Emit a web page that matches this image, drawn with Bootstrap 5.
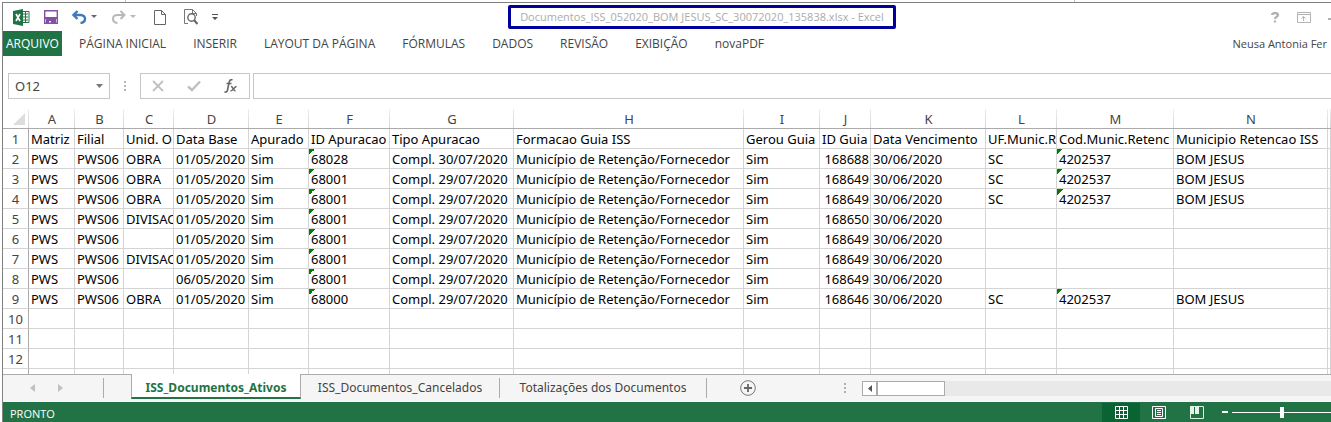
<!DOCTYPE html>
<html lang="pt-BR">
<head>
<meta charset="utf-8">
<meta name="viewport" content="width=device-width, initial-scale=1">
<title>Documentos_ISS_052020_BOM JESUS_SC_30072020_135838.xlsx - Excel</title>
<link rel="stylesheet" href="https://cdn.jsdelivr.net/npm/bootstrap@5.3.0/dist/css/bootstrap.min.css">
<style>
  :root { --xl: #217346; --rule: #d4d4d4; --edge: #ababab; --box: #c6c6c6; }
  body { font: 12px/16px "Open Sans", "Noto Sans", sans-serif; color: #444; background: #fff; }
  button { color: inherit; font: inherit; background: none; border: 0; padding: 0; }
  svg { display: block; flex: none; }
  .backdrop { height: 2px; padding-left: 125px; }
  .backdrop span { width: 1px; background: var(--box); }
  .backdrop span + span { margin-left: 948px; }
  .app { margin-left: 2px; border: solid #808080; border-width: 1px 0 0 1px; min-height: 0; }

  .titlebar { height: 28px; }
  .quick { flex: 496; padding-left: 10px; gap: 14px; }
  .file-name { border: 3px solid #00009c; border-radius: 2px; color: #ababab; font-size: 11px; line-height: 18px; padding: 0 9px; }
  .win { flex: 436; gap: 17px; }

  .ribbon { height: 25px; gap: 27px; }
  .ribbon a { color: #444; text-decoration: none; }
  .ribbon .file-tab { background: var(--xl); color: #fff; width: 59px; line-height: 25px; margin-right: -10px; text-align: center; }
  .user { font-size: 11px; }

  .formula { padding: 17px 0 10px 5px; }
  .boxed { height: 26px; border: 1px solid var(--box); }
  .name-box { width: 102px; padding: 0 6px; }
  .name-box input { width: 76px; border: 0; padding: 0; color: #444; outline: 0; font: 13px "Noto Sans", sans-serif; }
  .tools { width: 110px; margin-right: 3px; }
  .fx-input { border-right: 0; outline: 0; padding: 0 4px; font-size: 13px; }

  .sheet { min-height: 0; overflow: hidden; font: 13px/18px "Noto Sans", "Open Sans", sans-serif; }
  .sheet table { table-layout: fixed; width: 100%; border-collapse: separate; border-spacing: 0; color: #000; }
  .sheet td, .sheet th { height: 20px; padding: 1px 0 0 2px; border: solid var(--rule); border-width: 0 1px 1px 0; white-space: nowrap; overflow: hidden; font-weight: 400; }
  .sheet thead th { padding: 1px 0 0; text-align: center; color: #444; border-bottom-color: var(--edge); border-right: 0;
    background: linear-gradient(#eee, #d4d4d4) right / 1px 100% no-repeat; }
  .sheet tbody th { padding: 1px 0 0; text-align: center; color: #444; border-right-color: var(--edge); }
  .sheet .num { text-align: right; padding-right: 1px; }
  .sheet .flag { background: linear-gradient(135deg, #008000 50%, transparent 50%) 0 0 / 6px 6px no-repeat; }
  .sheet thead svg { margin-left: 10px; }

  .tabs { height: 28px; background: #f5f5f5; border-top: 1px solid var(--edge); font: 12px/20px "Noto Sans", "Open Sans", sans-serif; }
  .tabs .arrows { width: 101px; height: 20px; margin-top: 3px; padding-left: 27px; gap: 23px; border-right: 1px solid var(--edge); }
  .tabs a { color: #444; text-decoration: none; height: 20px; margin-top: 3px; text-align: center; border-right: 1px solid var(--edge); }
  .tabs a.current { width: 170px; height: 25px; margin: -1px 0 0 27px; padding-top: 4px; background: #fff; color: var(--xl); font-weight: 700;
    border: solid var(--edge); border-width: 0 1px 2px; border-bottom-color: var(--xl); }
  .tabs .second { width: 199px; }
  .tabs .third { width: 207px; }
  .tabs .add { margin: 5px 88px 0 33px; }
  .track { height: 15px; margin-top: 6px; background: #e9e9e9; }
  .track .step { width: 15px; border: 1px solid var(--edge); background: #fff; }
  .track .thumb { width: 68px; border: 1px solid var(--edge); background: #fff; }

  .status { height: 20px; background: var(--xl); color: #fff; font-size: 11px; padding-left: 7px; }
  .status .view { width: 38px; height: 19px; margin-top: 1px; }
  .status .on { background: #0a6332; }
  .status .minus { margin: 1px 4px 0 6px; }
  .zoom { width: 99px; height: 20px; appearance: none; background: linear-gradient(#fff, #fff) 0 50% / 100% 1px no-repeat; }
  .zoom::-webkit-slider-thumb { appearance: none; width: 4px; height: 11px; background: #fff; }
</style>
</head>
<body class="d-flex flex-column vh-100 overflow-hidden">
<div class="backdrop d-flex flex-shrink-0"><span></span><span></span></div>
<div class="app d-flex flex-column flex-grow-1">

  <header class="titlebar d-flex align-items-center flex-shrink-0">
    <div class="quick d-flex align-items-center">
      <svg width="17" height="17" viewBox="0 0 17 17"><path d="M9 2.500h7v11H9z" fill="#fff" stroke="#217346"/><path d="M10 5h5M10 8h5M10 11h5M12.500 3v11" stroke="#217346"/><path d="M0 2l10-2v17L0 15z" fill="#217346"/><path d="M3 5l4 7M7 5l-4 7" stroke="#fff" stroke-width="1.600"/></svg>
      <button aria-label="Salvar"><svg width="14" height="14" viewBox="0 0 14 14"><path d="M.7.700h12.600v12.600H.700z" fill="#fff" stroke="#8551a8" stroke-width="1.400"/><path d="M0 7h14v2H0zM2 9h10v5H7v-3H5v3H2z" fill="#8551a8"/></svg></button>
      <button class="d-flex align-items-center" aria-label="Desfazer"><svg width="15" height="14" viewBox="0 0 15 14"><path d="M5.500 1L1.500 5l4 4M2 5h6.500c6 0 6 7.500 0 8" fill="none" stroke="#3d7ab8" stroke-width="2.400"/></svg><svg class="ms-1" width="6" height="4"><path d="M0 0h6L3 3z" fill="#666"/></svg></button>
      <button class="d-flex align-items-center" aria-label="Refazer"><svg width="15" height="14" viewBox="0 0 15 14"><path d="M9.500 1l4 4-4 4M13 5H6.500c-6 0-6 7.500 0 8" fill="none" stroke="#b8b8b8" stroke-width="2"/></svg><svg class="ms-1" width="6" height="4"><path d="M0 0h6L3 3z" fill="#b8b8b8"/></svg></button>
      <button class="ms-1" aria-label="Novo"><svg width="12" height="15" viewBox="0 0 12 15"><path d="M.5.500h7l4 4v10H.500zM7.500.500v4h4" fill="none" stroke="#666"/></svg></button>
      <button class="ms-1" aria-label="Visualizar impressão"><svg width="14" height="16" viewBox="0 0 14 16"><path d="M4 14.500H.500V.500h8l4 4V7M8.500.500v4h4" fill="none" stroke="#777"/><circle cx="7.500" cy="8.500" r="3.700" fill="#fff" stroke="#666" stroke-width="1.400"/><path d="M10 11l3.500 4" stroke="#666" stroke-width="2"/></svg></button>
      <button aria-label="Personalizar"><svg width="6" height="7"><path d="M0 0h6v1H0zM0 3h6L3 6z" fill="#555"/></svg></button>
    </div>
    <div class="file-name text-nowrap">Documentos_ISS_052020_BOM JESUS_SC_30072020_135838.xlsx - Excel</div>
    <div class="win d-flex align-items-center justify-content-end">
      <button aria-label="Ajuda"><svg width="9" height="11" viewBox="0 0 9 11"><path d="M1 3c0-2.600 6-2.600 6 0 0 2-3 1.500-3 4M4 8.500v2" fill="none" stroke="#b0b0b0" stroke-width="2.200"/></svg></button>
      <button aria-label="Opções da faixa"><svg width="14" height="11" viewBox="0 0 14 11"><path d="M.5.500h13v10H.500zM.500 2.500h13M6.500 9V4.500M4.500 6.500l2-2 2 2" fill="none" stroke="#b5b5b5"/></svg></button>
      <button aria-label="Minimizar"><svg width="3" height="11"><path d="M0 6h3v2H0z" fill="#b0b0b0"/></svg></button>
    </div>
  </header>

  <nav class="ribbon d-flex align-items-center flex-shrink-0 text-nowrap">
    <a class="file-tab" href="#">ARQUIVO</a><a href="#">PÁGINA INICIAL</a><a href="#">INSERIR</a><a href="#">LAYOUT DA PÁGINA</a><a href="#">FÓRMULAS</a><a href="#">DADOS</a><a href="#">REVISÃO</a><a href="#">EXIBIÇÃO</a><a href="#">novaPDF</a>
    <a class="user ms-auto pe-1" href="#">Neusa Antonia Fer</a>
  </nav>

  <div class="formula d-flex flex-shrink-0">
    <div class="name-box boxed d-flex align-items-center justify-content-between">
      <input aria-label="Caixa de nome" value="O12">
      <button aria-label="Nomes"><svg width="7" height="4"><path d="M0 0h7L3.500 4z" fill="#777"/></svg></button>
    </div>
    <svg class="mx-auto" width="30" height="26"><path d="M14 8h2v2h-2zM14 12h2v2h-2zM14 16h2v2h-2z" fill="#b5b5b5"/></svg>
    <div class="tools boxed d-flex align-items-center justify-content-around">
      <button aria-label="Cancelar"><svg width="12" height="12" viewBox="0 0 12 12"><path d="M1 1l10 10M11 1L1 11" stroke="#c0c0c0" stroke-width="1.800"/></svg></button>
      <button aria-label="Inserir"><svg width="14" height="12" viewBox="0 0 14 12"><path d="M1 6.500L5 10l8-8.500" fill="none" stroke="#c0c0c0" stroke-width="2.400"/></svg></button>
      <button aria-label="Inserir função"><svg width="14" height="14" viewBox="0 0 14 14"><path d="M8.500 1.200C6.500-.2 5.500 1.500 5 4L3.500 11c-.4 2-1.500 2.500-3 1.800M2.500 4.500h5" fill="none" stroke="#666" stroke-width="1.600"/><path d="M7 7.500c2-.5 2 4.500 4.500 4.500M12.500 7.500C10.500 7.500 9 12 6.500 12" fill="none" stroke="#666" stroke-width="1.400"/></svg></button>
    </div>
    <input class="fx-input boxed flex-grow-1" aria-label="Barra de fórmulas">
  </div>

  <main class="sheet flex-grow-1">
    <table>
      <colgroup><col width="26"><col width="46"><col width="49"><col width="50"><col width="75"><col width="60"><col width="81"><col width="124"><col width="230"><col width="76"><col width="51"><col width="115"><col width="71"><col width="117"><col width="154"><col></colgroup>
      <thead><tr><th><svg width="12" height="12"><path d="M12 0v12H0z" fill="#ddd"/></svg></th><th>A</th><th>B</th><th>C</th><th>D</th><th>E</th><th>F</th><th>G</th><th>H</th><th>I</th><th>J</th><th>K</th><th>L</th><th>M</th><th>N</th><th></th></tr></thead>
      <tbody>
        <tr><th>1</th><td>Matriz</td><td>Filial</td><td>Unid. O</td><td>Data Base</td><td>Apurado</td><td>ID Apuracao</td><td>Tipo Apuracao</td><td>Formacao Guia ISS</td><td>Gerou Guia</td><td>ID Guia</td><td>Data Vencimento</td><td>UF.Munic.R</td><td>Cod.Munic.Retenc</td><td>Municipio Retencao ISS</td><td>T</td></tr>
        <tr><th>2</th><td>PWS</td><td>PWS06</td><td>OBRA</td><td>01/05/2020</td><td>Sim</td><td class="flag">68028</td><td>Compl. 30/07/2020</td><td>Município de Retenção/Fornecedor</td><td>Sim</td><td class="num">168688</td><td>30/06/2020</td><td>SC</td><td class="flag">4202537</td><td>BOM JESUS</td><td></td></tr>
        <tr><th>3</th><td>PWS</td><td>PWS06</td><td>OBRA</td><td>01/05/2020</td><td>Sim</td><td class="flag">68001</td><td>Compl. 29/07/2020</td><td>Município de Retenção/Fornecedor</td><td>Sim</td><td class="num">168649</td><td>30/06/2020</td><td>SC</td><td class="flag">4202537</td><td>BOM JESUS</td><td></td></tr>
        <tr><th>4</th><td>PWS</td><td>PWS06</td><td>OBRA</td><td>01/05/2020</td><td>Sim</td><td class="flag">68001</td><td>Compl. 29/07/2020</td><td>Município de Retenção/Fornecedor</td><td>Sim</td><td class="num">168649</td><td>30/06/2020</td><td>SC</td><td class="flag">4202537</td><td>BOM JESUS</td><td></td></tr>
        <tr><th>5</th><td>PWS</td><td>PWS06</td><td>DIVISAO</td><td>01/05/2020</td><td>Sim</td><td class="flag">68001</td><td>Compl. 29/07/2020</td><td>Município de Retenção/Fornecedor</td><td>Sim</td><td class="num">168650</td><td>30/06/2020</td><td></td><td></td><td></td><td></td></tr>
        <tr><th>6</th><td>PWS</td><td>PWS06</td><td></td><td>01/05/2020</td><td>Sim</td><td class="flag">68001</td><td>Compl. 29/07/2020</td><td>Município de Retenção/Fornecedor</td><td>Sim</td><td class="num">168649</td><td>30/06/2020</td><td></td><td></td><td></td><td></td></tr>
        <tr><th>7</th><td>PWS</td><td>PWS06</td><td>DIVISAO</td><td>01/05/2020</td><td>Sim</td><td class="flag">68001</td><td>Compl. 29/07/2020</td><td>Município de Retenção/Fornecedor</td><td>Sim</td><td class="num">168649</td><td>30/06/2020</td><td></td><td></td><td></td><td></td></tr>
        <tr><th>8</th><td>PWS</td><td>PWS06</td><td></td><td>06/05/2020</td><td>Sim</td><td class="flag">68001</td><td>Compl. 29/07/2020</td><td>Município de Retenção/Fornecedor</td><td>Sim</td><td class="num">168649</td><td>30/06/2020</td><td></td><td></td><td></td><td></td></tr>
        <tr><th>9</th><td>PWS</td><td>PWS06</td><td>OBRA</td><td>01/05/2020</td><td>Sim</td><td class="flag">68000</td><td>Compl. 29/07/2020</td><td>Município de Retenção/Fornecedor</td><td>Sim</td><td class="num">168646</td><td>30/06/2020</td><td>SC</td><td class="flag">4202537</td><td>BOM JESUS</td><td></td></tr>
        <tr><th>10</th><td></td><td></td><td></td><td></td><td></td><td></td><td></td><td></td><td></td><td></td><td></td><td></td><td></td><td></td><td></td></tr>
        <tr><th>11</th><td></td><td></td><td></td><td></td><td></td><td></td><td></td><td></td><td></td><td></td><td></td><td></td><td></td><td></td><td></td></tr>
        <tr><th>12</th><td></td><td></td><td></td><td></td><td></td><td></td><td></td><td></td><td></td><td></td><td></td><td></td><td></td><td></td><td></td></tr>
        <tr><th></th><td></td><td></td><td></td><td></td><td></td><td></td><td></td><td></td><td></td><td></td><td></td><td></td><td></td><td></td><td></td></tr>
      </tbody>
    </table>
  </main>

  <nav class="tabs d-flex flex-shrink-0 text-nowrap" aria-label="Planilhas">
    <div class="arrows d-flex align-items-center">
      <button aria-label="Anterior"><svg width="5" height="8"><path d="M5 0v8L0 4z" fill="#c0c0c0"/></svg></button>
      <button aria-label="Próxima"><svg width="5" height="8"><path d="M0 0v8l5-4z" fill="#c0c0c0"/></svg></button>
    </div>
    <a class="current" href="#" aria-current="page">ISS_Documentos_Ativos</a>
    <a class="second" href="#">ISS_Documentos_Cancelados</a>
    <a class="third" href="#">Totalizações dos Documentos</a>
    <button class="add align-self-start" aria-label="Nova planilha"><svg width="16" height="16" viewBox="0 0 16 16"><circle cx="8" cy="8" r="7.300" fill="none" stroke="#777"/><path d="M8 4v8M4 8h8" stroke="#666" stroke-width="1.800"/></svg></button>
    <svg class="me-3" width="2" height="28"><path d="M0 8h2v2H0zM0 12h2v2H0zM0 16h2v2H0z" fill="#b0b0b0"/></svg>
    <div class="track d-flex flex-grow-1">
      <button class="step d-flex align-items-center justify-content-center" aria-label="Rolar à esquerda"><svg width="4" height="7"><path d="M4 0v7L0 3.500z" fill="#555"/></svg></button>
      <div class="thumb"></div>
    </div>
  </nav>

  <footer class="status d-flex align-items-center flex-shrink-0">
    <span class="me-auto pt-1">PRONTO</span>
    <button class="view on d-flex align-items-center justify-content-center" aria-label="Normal"><svg width="13" height="13"><path d="M.5.500h12v12H.500zM.500 4.500h12M.500 8.500h12M4.500.500v12M8.500.500v12" fill="none" stroke="#fff"/></svg></button>
    <button class="view d-flex align-items-center justify-content-center" aria-label="Layout da página"><svg width="14" height="13"><path d="M.5.500h13v12H.500zM3.500 2.500h7v8h-7zM5 4.500h4M5 6.500h4M5 8.500h4" fill="none" stroke="#fff"/></svg></button>
    <button class="view d-flex align-items-center justify-content-center" aria-label="Quebra de página"><svg width="14" height="13"><path d="M.5.500h13v12H.500z" fill="none" stroke="#dfeee5"/><path d="M0 0h4v8H0zM5 0h4v8H5z" fill="#e6f1ea"/></svg></button>
    <button class="minus" aria-label="Reduzir"><svg width="6" height="19"><path d="M0 8h6v2H0z" fill="#fff"/></svg></button>
    <input class="zoom" type="range" min="0" max="100" value="51" aria-label="Zoom">
  </footer>
</div>
<script src="https://cdn.jsdelivr.net/npm/bootstrap@5.3.0/dist/js/bootstrap.bundle.min.js"></script>
</body>
</html>
